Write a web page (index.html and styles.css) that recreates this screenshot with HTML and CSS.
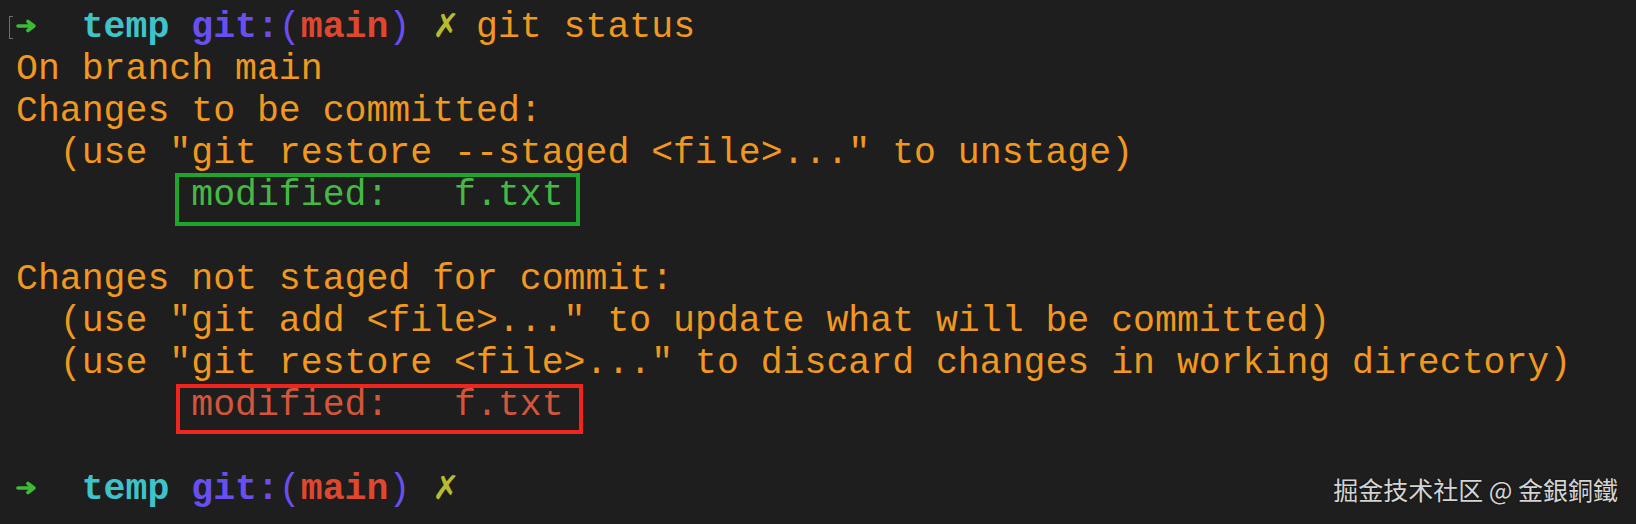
FILE: index.html
```html
<!DOCTYPE html>
<html lang="en">
<head>
<meta charset="utf-8">
<title>git status</title>
<link rel="stylesheet" href="styles.css">
</head>
<body>
<main class="screen">
<pre class="term"><span class="cursor"></span><svg class="arrow" viewBox="0 0 22 14" preserveAspectRatio="none"><path d="M2 7 H17 M12 2.5 L18 7 L12 11.5" fill="none" stroke="currentColor" stroke-width="3.6" stroke-linecap="round" stroke-linejoin="round"/></svg>  <span class="dir">temp</span> <span class="git">git:</span><span class="paren">(</span><span class="branch">main</span><span class="paren">)</span> <span class="dirty">✗</span> git status
On branch main
Changes to be committed:
  (use "git restore --staged &lt;file&gt;..." to unstage)
        <span class="staged">modified:   f.txt</span>

Changes not staged for commit:
  (use "git add &lt;file&gt;..." to update what will be committed)
  (use "git restore &lt;file&gt;..." to discard changes in working directory)
        <span class="unstaged">modified:   f.txt</span>

<svg class="arrow" viewBox="0 0 22 14" preserveAspectRatio="none"><path d="M2 7 H17 M12 2.5 L18 7 L12 11.5" fill="none" stroke="currentColor" stroke-width="3.6" stroke-linecap="round" stroke-linejoin="round"/></svg>  <span class="dir">temp</span> <span class="git">git:</span><span class="paren">(</span><span class="branch">main</span><span class="paren">)</span> <span class="dirty">✗</span></pre>
<div class="watermark">掘金技术社区 @ 金銀銅鐵</div>
</main>
</body>
</html>
```
FILE: styles.css
```css
html, body {
  margin: 0;
  padding: 0;
  background: #1e1e1e;
}
.screen {
  position: relative;
  width: 1636px;
  height: 524px;
  overflow: hidden;
  background: #1e1e1e;
}
.term {
  margin: 0;
  padding: 7px 0 0 16px;
  font-family: "Liberation Mono", "DejaVu Sans Mono", monospace;
  font-size: 36.5px;
  line-height: 42px;
  color: #f0981f;
  white-space: pre;
}
.cursor {
  display: inline-block;
  box-sizing: border-box;
  width: 4px;
  height: 23px;
  margin-left: -7px;
  margin-right: 3px;
  border: 1.5px solid #6f6f6f;
  border-right: none;
  vertical-align: -2px;
}
.arrow {
  width: 0.6em;
  height: 14px;
  vertical-align: 4px;
  color: #3dbb37;
}
.dir {
  color: #3ec3cb;
  font-weight: bold;
}
.git {
  color: #6a4ff0;
  font-weight: bold;
}
.paren {
  color: #6a4ff0;
}
.branch {
  color: #e0472f;
  font-weight: bold;
}
.dirty {
  color: #b7bb2c;
  font-family: "DejaVu Sans", sans-serif;
  font-size: 33px;
  font-weight: bold;
  line-height: 1;
  display: inline-block;
  width: 21.9px;
  text-align: center;
}
.staged {
  position: relative;
  color: #45b845;
}
.staged::after {
  content: "";
  position: absolute;
  left: -16px;
  right: -16px;
  top: -2px;
  bottom: -10px;
  border: 4.5px solid #1fa52b;
}
.unstaged {
  position: relative;
  color: #d5553a;
}
.unstaged::after {
  content: "";
  position: absolute;
  left: -15px;
  right: -19px;
  top: -1px;
  bottom: -8px;
  border: 4px solid #f0251d;
}
.watermark {
  position: absolute;
  right: 18px;
  bottom: 20px;
  font-family: "Noto Sans CJK SC", sans-serif;
  font-size: 25px;
  line-height: 30px;
  color: #d4d4d4;
  text-shadow: 0 0 2px rgba(0, 0, 0, 0.6);
}
```
